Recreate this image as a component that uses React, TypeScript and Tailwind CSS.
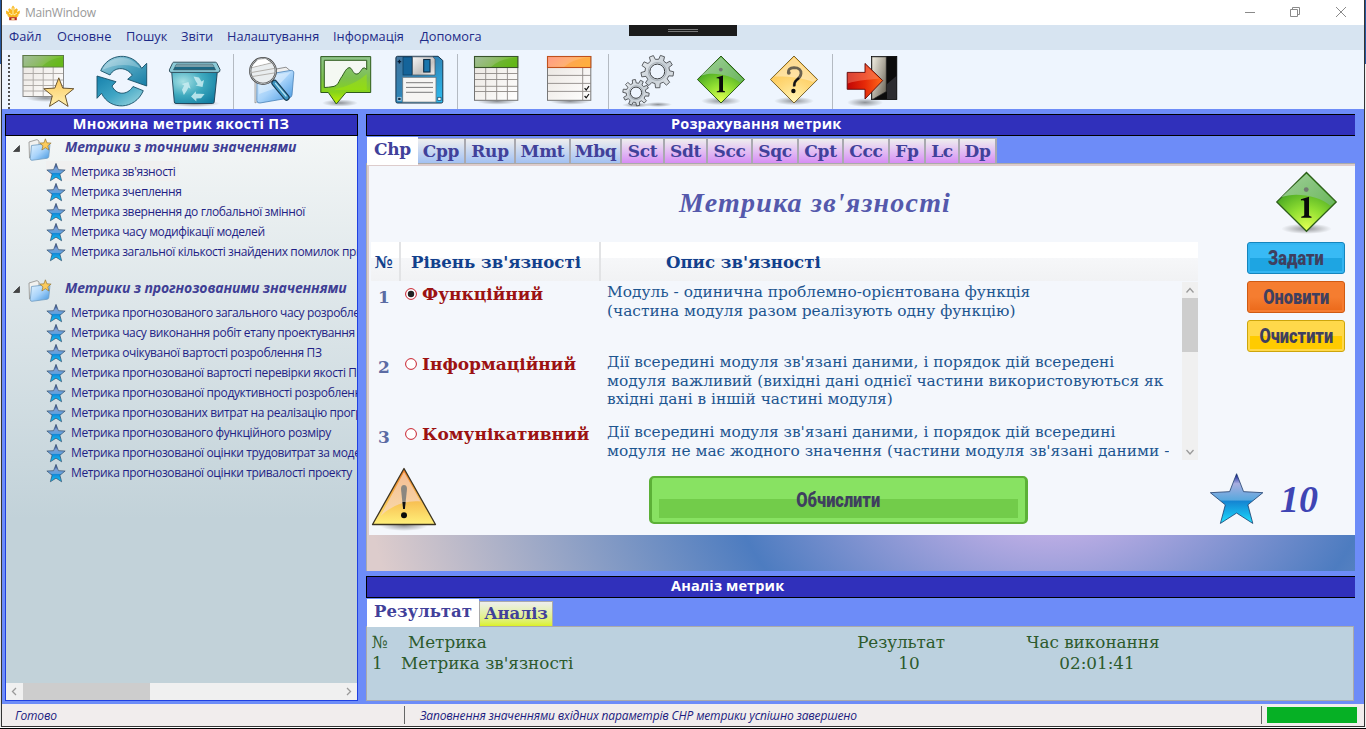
import React from "react";
import type { ReactNode } from "react";

const SANS = "font-['Open_Sans','Noto_Sans',sans-serif]";
const BOOK = "font-['DejaVu_Serif',serif]";

function starPoints(cx: number, cy: number, rx: number, ry: number, inner = 0.43) {
  const pts: string[] = [];
  for (let i = 0; i < 10; i++) {
    const k = i % 2 === 0 ? 1 : inner;
    const a = -Math.PI / 2 + (i * Math.PI) / 5;
    pts.push(`${(cx + Math.cos(a) * rx * k).toFixed(2)},${(cy + Math.sin(a) * ry * k).toFixed(2)}`);
  }
  return pts.join(" ");
}

function gearPath(cx: number, cy: number, outer: number, root: number, teeth: number) {
  const pts: string[] = [];
  const step = (Math.PI * 2) / teeth;
  for (let i = 0; i < teeth; i++) {
    const a = i * step + 0.15;
    const spec: [number, number][] = [
      [root, -0.3],
      [outer, -0.19],
      [outer, 0.19],
      [root, 0.3],
    ];
    spec.forEach(([r, o]) => {
      pts.push(`${(cx + Math.cos(a + o * step) * r).toFixed(2)} ${(cy + Math.sin(a + o * step) * r).toFixed(2)}`);
    });
  }
  return `M${pts.join(" L")} Z`;
}

function Defs() {
  return (
    <svg className="absolute h-0 w-0" aria-hidden="true">
      <defs>
        <linearGradient id="gGreenHead" x1="0" y1="0" x2="1" y2="0.3">
          <stop offset="0" stopColor="#a3bd9c" />
          <stop offset="0.5" stopColor="#8fbb6a" />
          <stop offset="1" stopColor="#6fc518" />
        </linearGradient>
        <linearGradient id="gOrangeHead" x1="0" y1="0" x2="1" y2="0.3">
          <stop offset="0" stopColor="#ff9a84" />
          <stop offset="0.5" stopColor="#ffae78" />
          <stop offset="1" stopColor="#ffbf4d" />
        </linearGradient>
        <linearGradient id="gPaper" x1="0" y1="0" x2="1" y2="1">
          <stop offset="0" stopColor="#e9e4df" />
          <stop offset="1" stopColor="#ffffff" />
        </linearGradient>
        <linearGradient id="gGold" x1="0" y1="0" x2="0" y2="1">
          <stop offset="0" stopColor="#fbc95e" />
          <stop offset="1" stopColor="#fff0b0" />
        </linearGradient>
        <linearGradient id="gTeal" x1="0" y1="0" x2="1" y2="1">
          <stop offset="0" stopColor="#a9d4e2" />
          <stop offset="0.5" stopColor="#4ea3bf" />
          <stop offset="1" stopColor="#157da6" />
        </linearGradient>
        <linearGradient id="gTeal2" x1="0" y1="0" x2="1" y2="1">
          <stop offset="0" stopColor="#1681ac" />
          <stop offset="0.5" stopColor="#3fa5c4" />
          <stop offset="1" stopColor="#a5dbe2" />
        </linearGradient>
        <radialGradient id="gBin" cx="0.25" cy="0.3" r="0.9">
          <stop offset="0" stopColor="#a6e0e4" />
          <stop offset="0.5" stopColor="#3ea9be" />
          <stop offset="1" stopColor="#0f7ba1" />
        </radialGradient>
        <linearGradient id="gFolder" x1="0" y1="0" x2="1" y2="1">
          <stop offset="0" stopColor="#e4f4ff" />
          <stop offset="0.5" stopColor="#a8d3fa" />
          <stop offset="1" stopColor="#3e93de" />
        </linearGradient>
        <linearGradient id="gChart" x1="0" y1="0" x2="0" y2="1">
          <stop offset="0" stopColor="#8fc48a" />
          <stop offset="0.45" stopColor="#7cc04f" />
          <stop offset="0.75" stopColor="#86d41a" />
          <stop offset="1" stopColor="#c2f000" />
        </linearGradient>
        <linearGradient id="gFloppy" x1="0" y1="0" x2="1" y2="1">
          <stop offset="0" stopColor="#44749c" />
          <stop offset="0.45" stopColor="#2f83b5" />
          <stop offset="1" stopColor="#2dc0f4" />
        </linearGradient>
        <linearGradient id="gMetal" x1="0" y1="0" x2="1" y2="1">
          <stop offset="0" stopColor="#f5f5f5" />
          <stop offset="0.6" stopColor="#c4c2c0" />
          <stop offset="1" stopColor="#f2f0ee" />
        </linearGradient>
        <linearGradient id="gGear" x1="0" y1="0" x2="1" y2="1">
          <stop offset="0" stopColor="#f2f5f8" />
          <stop offset="0.5" stopColor="#c5cdd4" />
          <stop offset="1" stopColor="#e4e8ec" />
        </linearGradient>
        <radialGradient id="gDiaGreen" cx="0.5" cy="0.95" r="0.75">
          <stop offset="0" stopColor="#e0ff52" />
          <stop offset="0.45" stopColor="#92e032" />
          <stop offset="1" stopColor="#3d9f20" />
        </radialGradient>
        <linearGradient id="gGlossGreen" x1="0" y1="0" x2="1" y2="1">
          <stop offset="0" stopColor="#b4dab0" />
          <stop offset="1" stopColor="#6cb566" />
        </linearGradient>
        <radialGradient id="gDiaGold" cx="0.5" cy="0.95" r="0.8">
          <stop offset="0" stopColor="#fff4b4" />
          <stop offset="0.5" stopColor="#ffd97a" />
          <stop offset="1" stopColor="#fcc44e" />
        </radialGradient>
        <linearGradient id="gRed" x1="0" y1="0" x2="1" y2="0">
          <stop offset="0" stopColor="#c00505" />
          <stop offset="0.5" stopColor="#e62a08" />
          <stop offset="1" stopColor="#ff6a1a" />
        </linearGradient>
        <linearGradient id="gDoor" x1="0" y1="0" x2="1" y2="0.8">
          <stop offset="0" stopColor="#f3f0e4" />
          <stop offset="0.6" stopColor="#aaa598" />
          <stop offset="1" stopColor="#6d685c" />
        </linearGradient>
        <radialGradient id="gShadow">
          <stop offset="0" stopColor="#000" stopOpacity="0.4" />
          <stop offset="1" stopColor="#000" stopOpacity="0" />
        </radialGradient>
        <linearGradient id="gStar" x1="0" y1="0" x2="0" y2="1">
          <stop offset="0" stopColor="#000078" />
          <stop offset="0.1" stopColor="#5560b8" />
          <stop offset="0.2" stopColor="#a8aee0" />
          <stop offset="0.53" stopColor="#58a8de" />
          <stop offset="0.55" stopColor="#1484d2" />
          <stop offset="0.8" stopColor="#18b4ea" />
          <stop offset="1" stopColor="#22e4ff" />
        </linearGradient>
        <linearGradient id="gStarSmall" x1="0" y1="0" x2="0" y2="1">
          <stop offset="0" stopColor="#10206a" />
          <stop offset="0.3" stopColor="#7b9fd6" />
          <stop offset="0.55" stopColor="#5a9fdc" />
          <stop offset="0.58" stopColor="#1489d8" />
          <stop offset="1" stopColor="#12c8f6" />
        </linearGradient>
        <linearGradient id="gWarn" x1="0" y1="0" x2="0" y2="1">
          <stop offset="0" stopColor="#f07a20" />
          <stop offset="0.5" stopColor="#f6b54a" />
          <stop offset="1" stopColor="#fff07a" />
        </linearGradient>
        <linearGradient id="gWarnGloss" x1="0" y1="0" x2="0" y2="1">
          <stop offset="0" stopColor="#f5c8a8" />
          <stop offset="1" stopColor="#f8d8b4" />
        </linearGradient>
      </defs>
    </svg>
  );
}

function ToolIcon({ children }: { children: ReactNode }) {
  return (
    <svg className="mt-1 block h-[54px] w-[54px] shrink-0" viewBox="0 0 54 54">
      {children}
    </svg>
  );
}

function TableStarIcon() {
  return (
    <ToolIcon>
      <ellipse cx="24" cy="44" rx="20" ry="4" fill="url(#gShadow)" />
      <rect x="1" y="1.5" width="40.5" height="41" fill="url(#gPaper)" stroke="#8a8a8a" />
      <path d="M11.2 13v29M21.2 13v29M31.2 13v29M1 19.5h40M1 26h40M1 31.5h40M1 37h40" stroke="#a9a5a2" strokeWidth="0.9" />
      <rect x="1" y="1.5" width="40.5" height="11.5" fill="url(#gGreenHead)" stroke="#5b7a45" strokeWidth="1" />
      <path d="M20 12.5C26 7 32 4 41 3v9.5z" fill="#5fae20" opacity="0.5" />
      <polygon points={starPoints(36.8, 39.6, 15.8, 15.8)} fill="url(#gGold)" stroke="#5b4520" strokeWidth="0.9" />
    </ToolIcon>
  );
}

function RefreshIcon() {
  return (
    <ToolIcon>
      <path d="M4.7 16.7C12-1 36-3 45.7 14.3L50.7 9.3V32L31.7 25.3 36.3 21.3C31 13 19 12 14 21z" fill="url(#gTeal)" stroke="#164f68" strokeWidth="0.9" />
      <path d="M1 22 20 27.7 16 32C20 41 31 42 37 32.5L47.3 36.7C39 56 14 57 5.5 39.3L1 44.3z" fill="url(#gTeal2)" stroke="#164f68" strokeWidth="0.9" />
      <path d="M6 16C14 2 34-1 44.5 14.5 34 9 18 10 6 16z" fill="#fff" opacity="0.25" />
    </ToolIcon>
  );
}

function BinIcon() {
  const arrow = "M25.5 22.5 31 23.5 33.5 27.5 36 26 34.5 33 27.5 31.5 29.7 30.2 27.5 26.8z";
  return (
    <ToolIcon>
      <ellipse cx="27" cy="49.5" rx="25" ry="3.5" fill="url(#gShadow)" />
      <path d="M3.7 18 6.3 48Q6.5 49.5 8 49.5H44.5Q46 49.5 46.2 48L49.3 18z" fill="url(#gBin)" stroke="#1d3d52" strokeWidth="0.9" />
      <path d="M5.6 8.2H47.4Q48.5 8.2 49 9.5L52 15.5Q52.3 18.2 50 18.4H3Q1 18.2 1.4 15.8L4.5 9.2Q5 8.2 5.6 8.2z" fill="#8ccbd8" stroke="#30505e" strokeWidth="1" />
      <path d="M8.5 10.2H44.5L47.5 15.8H5.5z" fill="#1c6884" stroke="#24404c" strokeWidth="0.6" />
      <path d="M8.5 10.2H44.5L46 13H7z" fill="#9ab0b4" opacity="0.75" />
      <g fill="#c9edf2" opacity="0.85">
        <path d={arrow} />
        <path d={arrow} transform="rotate(120 26 34.5)" />
        <path d={arrow} transform="rotate(240 26 34.5)" />
      </g>
    </ToolIcon>
  );
}

function SearchFolderIcon() {
  return (
    <ToolIcon>
      <path d="M9 24 12 22 14 46 9 49z" fill="#e6e6e6" stroke="#888" strokeWidth="0.7" />
      <path d="M25 16 40 13.2 44 16.5V24H25z" fill="#efefef" stroke="#777" strokeWidth="0.8" />
      <path d="M11 25Q12 22 15 21.5L44 16.5Q48 16 47.8 19L46 41Q45.6 43.5 43 44L14 49Q11 49.5 10.8 46.5z" fill="url(#gFolder)" stroke="#4a82b6" strokeWidth="0.8" />
      <path d="M14 24 45 18 30 34 13 40z" fill="#fff" opacity="0.35" />
      <path d="M28.5 29 40.5 43.5" stroke="#16394f" strokeWidth="6.4" strokeLinecap="round" />
      <path d="M28.5 29 40.5 43.5" stroke="#3d94c0" strokeWidth="4.2" strokeLinecap="round" />
      <path d="M29.5 29.3 40 42" stroke="#b4e2f2" strokeWidth="1.3" strokeLinecap="round" />
      <circle cx="17" cy="17" r="12.8" fill="#e9edef" stroke="#4a4a4a" strokeWidth="2.2" />
      <circle cx="17" cy="17" r="12.8" fill="none" stroke="#c7cbce" strokeWidth="0.8" />
      <path d="M6 13.5 25 9M5.5 18.5 28 14.5M6.5 22.5 28 19" stroke="#b3b0ac" strokeWidth="1" />
      <path d="M6 13 24 8.5 20 5 12 5.5z" fill="#fff" />
    </ToolIcon>
  );
}

function ChartIcon() {
  return (
    <ToolIcon>
      <ellipse cx="20" cy="49" rx="18" ry="3.6" fill="url(#gShadow)" />
      <path d="M0.8 2.6H50.7V38.5H26L16.3 50 8.3 38.5H0.8z" fill="url(#gChart)" stroke="#2d5a1c" strokeWidth="1" />
      <path d="M4.3 6.3H46.7V15.5Q44.5 13 42.7 14.3C40.5 17 39 20.5 36 20C32.5 19.5 32 13 29 13.7C25.5 14.5 24 20 20.7 24.3C18.5 28.5 17.5 31.5 14 32.4Q8 33.5 4.3 33.5z" fill="#f4f8f2" stroke="#2d5a1c" strokeWidth="1" />
      <path d="M15 35C26 33 38 28 46.7 20V36H15z" fill="#a4e800" opacity="0.45" />
    </ToolIcon>
  );
}

function FloppyIcon() {
  return (
    <ToolIcon>
      <path d="M3.5 2.3H44L48.8 6.5V47.5Q48.8 49 47.3 49H3.5Q1.9 49 1.9 47.5V4Q1.9 2.3 3.5 2.3z" fill="url(#gFloppy)" stroke="#16324a" strokeWidth="1" />
      <rect x="9" y="3" width="9" height="18" fill="#15649a" stroke="#103a5a" strokeWidth="0.7" />
      <path d="M18.5 2.8H38.5L41 5V21H18.5z" fill="url(#gMetal)" stroke="#4e5a64" strokeWidth="0.8" />
      <rect x="29.7" y="5.5" width="6.3" height="12.5" fill="#1a76ad" stroke="#0e2c44" strokeWidth="1.1" />
      <rect x="8.7" y="23.3" width="33.3" height="24.8" fill="#f6f5f3" stroke="#6b7780" strokeWidth="0.8" />
      <path d="M12 28.7h27M12 33.4h27M12 38.3h27" stroke="#7a7a7a" strokeWidth="1" />
      <path d="M3.6 7.6h3.6M5.4 5.8v3.6" stroke="#071c34" strokeWidth="1.4" />
      <rect x="3.8" y="43.3" width="3.2" height="3.2" fill="#0f2c46" stroke="#cfe6f4" strokeWidth="0.7" />
      <rect x="43.8" y="43.3" width="3.2" height="3.2" fill="#fff" stroke="#15415e" strokeWidth="0.7" />
    </ToolIcon>
  );
}

function TableIcon() {
  return (
    <ToolIcon>
      <ellipse cx="25" cy="47.5" rx="20" ry="3.2" fill="url(#gShadow)" />
      <rect x="2.5" y="2.5" width="43.3" height="43.8" fill="url(#gPaper)" stroke="#747474" />
      <path d="M13.7 14v32M24.7 14v32M35.4 14v32M3 19.5h43M3 25.5h43M3 32.3h43M3 37.5h43" stroke="#8e8a87" strokeWidth="0.9" />
      <rect x="2.5" y="2.5" width="43.3" height="11" fill="url(#gGreenHead)" stroke="#38542a" strokeWidth="1.1" />
      <path d="M19 13C26 7 34 4 45 3.5V13z" fill="#58aa18" opacity="0.5" />
    </ToolIcon>
  );
}

function ChecklistIcon() {
  return (
    <ToolIcon>
      <ellipse cx="24" cy="47.5" rx="20" ry="3.2" fill="url(#gShadow)" />
      <rect x="1.5" y="2.5" width="43.3" height="43.8" fill="url(#gPaper)" stroke="#777" />
      <path d="M36.7 14v32M2 21.4h43M2 29.4h43M2 37.4h43" stroke="#8e8a87" strokeWidth="0.9" />
      <rect x="1.5" y="2.5" width="43.3" height="11" fill="url(#gOrangeHead)" stroke="#c0501c" strokeWidth="1.1" />
      <path d="M18 13C25 7 33 4 44 3.5V13z" fill="#ff9a2c" opacity="0.45" />
      <path d="M38.6 34.2 40.2 36 43 32.2M38.6 42 40.2 43.8 43 40" fill="none" stroke="#111" strokeWidth="1.2" />
    </ToolIcon>
  );
}

function GearsIcon() {
  return (
    <ToolIcon>
      <ellipse cx="14" cy="51" rx="14" ry="2.5" fill="url(#gShadow)" />
      <ellipse cx="36" cy="50.5" rx="14" ry="2.5" fill="url(#gShadow)" />
      <path d={gearPath(35.3, 17.5, 16.4, 12.3, 9)} fill="url(#gGear)" stroke="#4c4f53" strokeWidth="0.9" />
      <circle cx="35.3" cy="17.5" r="7.4" fill="#eef5fe" stroke="#3c3f43" strokeWidth="1" />
      <circle cx="35.3" cy="17.5" r="9" fill="none" stroke="#98a0a8" strokeWidth="0.7" />
      <path d={gearPath(14, 38.7, 13.2, 9.8, 10)} fill="url(#gGear)" stroke="#4c4f53" strokeWidth="0.9" />
      <circle cx="14" cy="38.7" r="5.6" fill="#eef5fe" stroke="#3c3f43" strokeWidth="1" />
      <circle cx="14" cy="38.7" r="7" fill="none" stroke="#98a0a8" strokeWidth="0.7" />
    </ToolIcon>
  );
}

function InfoDiamond() {
  return (
    <>
      <ellipse cx="25" cy="47" rx="20" ry="4.2" fill="url(#gShadow)" />
      <path d="M25 2 48.6 25.5 25 49 1.4 25.5z" fill="url(#gDiaGreen)" stroke="#2c5c1a" strokeWidth="1" />
      <path d="M25 3 47.4 25.5 44 28.5C36 21 16 17 5 21.8z" fill="url(#gGlossGreen)" opacity="0.85" />
      <circle cx="24.8" cy="15.6" r="1.9" fill="#707a70" />
      <path d="M20.6 23.4 27 21.4V36.2Q27 37 29 37.3V38.2H20.8V37.3Q23.2 37 23.2 36.2V25Q23.2 24 20.6 24.3z" fill="#0a0a0a" />
    </>
  );
}

function InfoIcon() {
  return (
    <ToolIcon>
      <InfoDiamond />
    </ToolIcon>
  );
}

function QuestionIcon() {
  return (
    <ToolIcon>
      <ellipse cx="26" cy="47" rx="20" ry="4.2" fill="url(#gShadow)" />
      <path d="M26 2 49.6 25.5 26 49 2.4 25.5z" fill="url(#gDiaGold)" stroke="#7a6530" strokeWidth="1" />
      <path d="M26 3.2 48.4 25.5 45 28C37 24 18 22 6.5 22.5z" fill="#fff0cf" opacity="0.55" />
      <path d="M20.3 19Q19.5 14 26 13.6Q33.3 13.8 33 19.6Q32.6 23.4 28.6 26Q26 28 26.2 32.4" fill="none" stroke="#6b6250" strokeWidth="2.8" />
      <path d="M31 24Q30 25 28.6 26Q26 28 26.2 32.4" fill="none" stroke="#111" strokeWidth="2" />
      <circle cx="20.8" cy="18.8" r="1.9" fill="#6b6250" />
      <circle cx="25.4" cy="37" r="2.2" fill="#0a0a0a" />
    </ToolIcon>
  );
}

function ExitIcon() {
  return (
    <ToolIcon>
      <ellipse cx="19" cy="48.5" rx="18" ry="4.5" fill="url(#gShadow)" />
      <rect x="25.4" y="2.4" width="25.4" height="43" fill="#0c0c0c" stroke="#000" strokeWidth="0.8" />
      <path d="M41 30 50.4 22V45H41z" fill="#2c2c30" />
      <path d="M25.8 2.8H40.3V37.5L27 45.2H25.8z" fill="url(#gDoor)" stroke="#222" strokeWidth="0.7" />
      <path d="M1.2 18.4H19V9.4L36.7 26.6 19 45V35.3H1.2z" fill="url(#gRed)" stroke="#5c0808" strokeWidth="0.9" />
      <path d="M1.8 19H19.6V11L33 24.5C22 26 12 26 1.8 29.5z" fill="#ff9d80" opacity="0.4" />
    </ToolIcon>
  );
}

function Separator() {
  return <div className="mt-1 h-[55px] w-px shrink-0 bg-[#b4bac2]" />;
}

function FolderIcon() {
  return (
    <svg className="h-6 w-6 shrink-0" viewBox="0 0 24 24">
      <path d="M1 4 9 1.6 11 3V8L4 22 1.5 20z" fill="#f1f1ef" stroke="#8e8e8c" strokeWidth="0.8" />
      <path d="M3.5 7.5 20 5.5Q22 5.4 21.9 7L20.8 18.4Q20.6 20 19 20.3L4 22.3Q2.3 22.4 2.3 20.6z" fill="url(#gFolder)" stroke="#6f9cc2" strokeWidth="0.8" />
      <polygon points={starPoints(17.4, 7, 6, 6.2)} fill="#fbcb5c" stroke="#8a6a25" strokeWidth="0.6" />
    </svg>
  );
}

function SmallStar() {
  return (
    <svg className="h-[19px] w-5 shrink-0" viewBox="0 0 20 19">
      <polygon points={starPoints(10, 10, 9.6, 9.6)} fill="url(#gStarSmall)" stroke="#35506e" strokeWidth="0.7" />
    </svg>
  );
}

function GroupRow({ children }: { children: ReactNode }) {
  return (
    <div className="flex h-6 items-center pl-[7px]">
      <svg className="h-[7px] w-[7px]" viewBox="0 0 7 7">
        <path d="M6.5 0.5V6.5H0.5z" fill="#444" stroke="#222" strokeWidth="0.6" />
      </svg>
      <div className="pt-1 pl-2">
        <FolderIcon />
      </div>
      <span className="pb-[2px] pl-[13px] text-[14px] leading-5 font-bold tracking-[-0.13px] whitespace-nowrap text-[#3f3f95] italic">{children}</span>
    </div>
  );
}

function TreeItem({ text, selected }: { text: string; selected?: boolean }) {
  return (
    <div className="flex h-5 items-start pl-10">
      <div className={selected ? "flex h-5 items-center bg-[#f0f0f0] pr-1" : "flex h-5 items-center pr-1"}>
        <div className="pt-[2px]">
          <SmallStar />
        </div>
        <span className="pt-[2px] pl-[5px] text-[12px] leading-[18px] tracking-[-0.37px] whitespace-nowrap text-[#1f1f85]">{text}</span>
      </div>
    </div>
  );
}

const exactMetrics = [
  "Метрика зв'язності",
  "Метрика зчеплення",
  "Метрика звернення до глобальної змінної",
  "Метрика часу модифікації моделей",
  "Метрика загальної кількості знайдених помилок при",
];

const forecastMetrics = [
  "Метрика прогнозованого загального часу розроблення",
  "Метрика часу виконання робіт етапу проектування",
  "Метрика очікуваної вартості розроблення ПЗ",
  "Метрика прогнозованої вартості перевірки якості ПЗ",
  "Метрика прогнозованої продуктивності розроблення",
  "Метрика прогнозованих витрат на реалізацію програм",
  "Метрика прогнозованого функційного розміру",
  "Метрика прогнозованої оцінки трудовитрат за моделлю",
  "Метрика прогнозованої оцінки тривалості проекту",
];

function Sidebar() {
  return (
    <aside className="flex w-[353px] shrink-0 flex-col">
      <div className="flex h-[22px] items-center justify-center border border-black bg-[#3030bb] pr-[1px] pb-[1px] text-[14.5px] leading-none font-bold tracking-[0.3px] text-white">
        Множина метрик якості ПЗ
      </div>
      <div className="flex h-[565px] flex-col border-x border-b border-[#2040e0]">
        <div className="h-[547px] overflow-hidden bg-gradient-to-b from-[#f3f6f6] to-[#c2d2d9] to-70%">
          <GroupRow>Метрики з точними значеннями</GroupRow>
          <div className="pt-[1px]">
            {exactMetrics.map((m, i) => (
              <TreeItem key={m} text={m} selected={i === 0} />
            ))}
          </div>
          <div className="h-4" />
          <GroupRow>Метрики з прогнозованими значеннями</GroupRow>
          <div className="pt-[1px]">
            {forecastMetrics.map((m) => (
              <TreeItem key={m} text={m} />
            ))}
          </div>
        </div>
        <div className="flex h-[17px] items-center bg-[#f0f0f0]">
          <svg className="h-[17px] w-[17px]" viewBox="0 0 17 17">
            <path d="M10 5 6.5 8.5 10 12" fill="none" stroke="#9a9a9a" strokeWidth="1.3" />
          </svg>
          <div className="h-[17px] w-[127px] bg-[#cdcdcd]" />
          <div className="grow" />
          <svg className="h-[17px] w-[17px]" viewBox="0 0 17 17">
            <path d="M7 5 10.5 8.5 7 12" fill="none" stroke="#9a9a9a" strokeWidth="1.3" />
          </svg>
        </div>
      </div>
    </aside>
  );
}

const tabs = [
  { name: "Cpp", cls: "w-[48px] to-[#a3c1f2]" },
  { name: "Rup", cls: "w-[50px] to-[#a3c1f2]" },
  { name: "Mmt", cls: "w-[55px] to-[#a3c1f2]" },
  { name: "Mbq", cls: "w-[51px] to-[#a3c1f2]" },
  { name: "Sct", cls: "w-[43px] to-[#d68df4]" },
  { name: "Sdt", cls: "w-[43px] to-[#d68df4]" },
  { name: "Scc", cls: "w-[45px] to-[#d68df4]" },
  { name: "Sqc", cls: "w-[46px] to-[#d68df4]" },
  { name: "Cpt", cls: "w-[45px] to-[#d68df4]" },
  { name: "Ccc", cls: "w-[46px] to-[#d68df4]" },
  { name: "Fp", cls: "w-[36px] to-[#d68df4]" },
  { name: "Lc", cls: "w-[34px] to-[#d68df4]" },
  { name: "Dp", cls: "w-[37px] to-[#d68df4]" },
];

const levels = [
  {
    n: 1,
    name: "Функційний",
    checked: true,
    lines: ["Модуль - одинична проблемно-орієнтована функція", "(частина модуля разом реалізують одну функцію)"],
  },
  {
    n: 2,
    name: "Інформаційний",
    checked: false,
    lines: [
      "Дії всередині модуля зв'язані даними, і порядок дій всередені",
      "модуля важливий (вихідні дані однієї частини використовуються як",
      "вхідні дані в іншій частині модуля)",
    ],
  },
  {
    n: 3,
    name: "Комунікативний",
    checked: false,
    lines: [
      "Дії всередині модуля зв'язані даними, і порядок дій всередині",
      "модуля не має жодного значення (частини модуля зв'язані даними -",
    ],
  },
];

function PanelHeader({ children }: { children: ReactNode }) {
  return (
    <div className="flex h-[22px] shrink-0 items-center border-y border-l border-black bg-[#3030bb] pb-[1px] pl-[304px] text-[14.5px] leading-none font-bold tracking-[0.15px] text-white">
      {children}
    </div>
  );
}

function LevelTable() {
  return (
    <div className="ml-[2px] w-[827px]">
      <div className={`flex h-[39px] bg-[linear-gradient(#fff_41%,#f6f7f9_41%,#f1f2f4)] text-[16.6px] leading-none font-bold text-[#12408c] ${BOOK}`}>
        <div className="flex w-[30px] items-center border-r-2 border-[#e2e3e5] pt-[2px] pl-1 tracking-[-1px]">№</div>
        <div className="flex w-[200px] items-center border-r-2 border-[#e2e3e5] pt-[2px] pl-[10px] whitespace-nowrap">Рівень зв'язності</div>
        <div className="flex items-center pt-[2px] pl-[65px] whitespace-nowrap">Опис зв'язності</div>
      </div>
      <div className="flex h-[179px] justify-between">
        <div className="h-[179px] overflow-hidden">
          {levels.map((l) => (
            <div key={l.n} className={`flex h-[70px] ${BOOK}`}>
              <div className="w-[34px] pt-[6px] pl-[7px] text-[17px] leading-5 font-bold text-[#5b6ba3]">{l.n}</div>
              <svg className="mt-[7px] h-3 w-3" viewBox="0 0 12 12">
                <circle cx="6" cy="6" r="5.4" fill="#fff" stroke="#c8202c" strokeWidth="1" />
                {l.checked && <circle cx="6" cy="6" r="3.2" fill="#222" />}
              </svg>
              <div className="w-[190px] pt-[3px] pl-[5px] text-[17px] leading-5 font-bold whitespace-nowrap text-[#9c1212]">{l.name}</div>
              <div className="pt-[2px] text-[15.4px] leading-[18.7px] whitespace-nowrap text-[#1d5590]">
                {l.lines.map((t) => (
                  <div key={t}>{t}</div>
                ))}
              </div>
            </div>
          ))}
        </div>
        <div className="mt-[1px] flex h-[178px] w-4 flex-col bg-[#f0f0f0]">
          <svg className="h-4 w-4" viewBox="0 0 16 16">
            <path d="M4.5 10.5 8 6.5 11.5 10.5" fill="none" stroke="#9a9a9a" strokeWidth="1.3" />
          </svg>
          <div className="h-[54px] bg-[#cdcdcd]" />
          <div className="grow" />
          <svg className="h-4 w-4" viewBox="0 0 16 16">
            <path d="M4.5 6 8 10 11.5 6" fill="none" stroke="#9a9a9a" strokeWidth="1.3" />
          </svg>
        </div>
      </div>
    </div>
  );
}

function GlossButton({ label, frame, lower }: { label: string; frame: string; lower: string }) {
  return (
    <button className={`flex h-8 w-[98px] rounded-[3px] border p-[2px] ${frame}`}>
      <span className={`flex h-full w-full items-center justify-center ${lower}`}>
        <span className="scale-x-[0.78] font-['Roboto',sans-serif] text-[21px] leading-none font-black text-[#3f3f5f]">{label}</span>
      </span>
    </button>
  );
}

function MetricPane() {
  return (
    <div className="h-[408px] shrink-0 border-t border-l border-[#aaaaaa] bg-[#ddcccc]">
      <div className="pt-[2px] pl-[2px]">
        <div className="flex h-[369px] flex-col bg-[#f4f7fc]">
          <div className="flex h-[295px]">
            <div className="w-[829px]">
              <div className="h-[76px] pt-[19px] pl-[310px] font-['Liberation_Serif',serif] text-[28px] leading-9 font-bold tracking-[1.2px] whitespace-nowrap text-[#5559ac] italic">
                Метрика зв'язності
              </div>
              <LevelTable />
            </div>
            <div className="ml-[49px] w-[98px]">
              <div className="h-[76px] pt-1 pl-7">
                <svg className="h-[65px] w-[63px]" viewBox="0 0 50 52" preserveAspectRatio="none">
                  <InfoDiamond />
                </svg>
              </div>
              <div className="flex flex-col gap-[7px]">
                <GlossButton label="Задати" frame="border-[#1585bd] bg-[#33b5f2]" lower="bg-[linear-gradient(#38baf5_50%,#1ea5e2_50%)]" />
                <GlossButton label="Оновити" frame="border-[#cf5a12] bg-[#f67c30]" lower="bg-[linear-gradient(#f57d30_50%,#ec6b1c)]" />
                <GlossButton label="Очистити" frame="border-[#cda50c] bg-[#ffd84a]" lower="bg-[linear-gradient(#ffd84a_50%,#ffcb00_50%)]" />
              </div>
            </div>
          </div>
          <div className="flex h-[74px]">
            <svg className="mt-[5px] ml-[2px] h-[66px] w-[66px]" viewBox="0 0 66 66">
              <ellipse cx="33" cy="59.5" rx="24" ry="5.5" fill="url(#gShadow)" />
              <path d="M33 2.5 64.5 58.5H1.5z" fill="url(#gWarn)" stroke="#3c3422" strokeWidth="1.3" strokeLinejoin="round" />
              <path d="M33 6 49.5 35.5C38 34 22 38 9.5 50z" fill="url(#gWarnGloss)" opacity="0.85" />
              <path d="M33 19Q36 19 36 23L33.9 43H32.1L30 23Q30 19 33 19z" fill="#8b8780" />
              <path d="M31.5 36H34.5L33.9 43H32.1z" fill="#111" />
              <circle cx="33" cy="49.3" r="3" fill="#0a0a0a" />
            </svg>
            <button className="mt-[15px] ml-[212px] flex h-12 w-[379px] rounded-[5px] border-x-[3px] border-y-2 border-[#5cb037] bg-[#88e262] px-[7px] pt-[3px] pb-1">
              <span className="flex h-full w-full items-center justify-center bg-[linear-gradient(#88e262_50%,#72cc4a_50%)]">
                <span className="scale-x-[0.82] font-['Roboto',sans-serif] text-[20px] leading-none font-black text-[#3f3f5f]">Обчислити</span>
              </span>
            </button>
            <svg className="mt-[11px] ml-[181px] h-[54px] w-[56px]" viewBox="0 0 56 54">
              <polygon points={starPoints(27.6, 29.2, 27.6, 27.5)} fill="url(#gStar)" stroke="#1c3c6c" strokeWidth="0.8" />
            </svg>
            <div className="pt-[18px] pl-[15px] font-['Liberation_Serif',serif] text-[38px] leading-10 font-bold text-[#3f45b4] italic">10</div>
          </div>
        </div>
      </div>
      <div className="h-9 bg-[radial-gradient(ellipse_682px_434px_at_683px_-55px,#e2bef1_0%,#4d7cc0_46.5%,#ddcccc_100%)]" />
    </div>
  );
}

function Workspace() {
  return (
    <section className="flex w-[989px] shrink-0 flex-col">
      <PanelHeader>Розрахування метрик</PanelHeader>
      <div className={`flex h-[27px] items-end text-[17px] leading-none font-bold text-[#41419a] ${BOOK}`}>
        <div className="relative -mb-[2px] ml-[1px] flex h-7 w-[51px] items-center justify-center bg-white pb-[3px] tracking-[-0.3px]">Chp</div>
        {tabs.map((t) => (
          <div
            key={t.name}
            className={`flex h-[25px] items-center justify-center border-t border-r-2 border-[#a9a9b0] bg-gradient-to-b from-[#eeeeee] tracking-[-0.3px] ${t.cls}`}
          >
            {t.name}
          </div>
        ))}
      </div>
      <MetricPane />
      <div className="h-[5px] shrink-0" />
      <PanelHeader>Аналіз метрик</PanelHeader>
      <div className={`flex h-7 items-end text-[16.5px] leading-none font-bold text-[#41419a] ${BOOK}`}>
        <div className="relative -mb-[1px] ml-[1px] flex h-7 w-[112px] items-center justify-center bg-white pb-[2px]">Результат</div>
        <div className="flex h-[25px] w-[74px] items-center justify-center border-x border-t border-[#aaa] bg-gradient-to-b from-[#eeeeee] to-[#dcf01c] tracking-[-0.2px]">Аналіз</div>
      </div>
      <div className={`grid h-[75px] w-[988px] grid-cols-[29px_410px_180px_204px] content-start border border-[#aaaaaa] bg-[#bcd1df] pt-[5px] pl-[5px] text-[16.8px] leading-[21px] text-[#2c5a2c] ${BOOK}`}>
        <div className="tracking-[-1px]">№</div>
        <div className="pl-[7px]">Метрика</div>
        <div className="text-center tracking-[-0.1px]">Результат</div>
        <div className="text-center">Час виконання</div>
        <div>1</div>
        <div>Метрика зв'язності</div>
        <div className="pl-4 text-center">10</div>
        <div className="pl-2 text-center">02:01:41</div>
      </div>
    </section>
  );
}

const menu = [
  { name: "Файл", w: "w-[48px]" },
  { name: "Основне", w: "w-[69px]" },
  { name: "Пошук", w: "w-[55px]" },
  { name: "Звіти", w: "w-[46px]" },
  { name: "Налаштування", w: "w-[106px]" },
  { name: "Інформація", w: "w-[87px]" },
  { name: "Допомога", w: "w-[80px]" },
];

export default function App() {
  return (
    <div className={`flex h-[729px] w-[1366px] flex-col overflow-hidden bg-white ${SANS}`}>
      <Defs />
      <div className="flex h-[727px]">
        <div className="flex w-px flex-col">
          <div className="h-16 bg-[#2558a0]" />
          <div className="grow bg-[#e6e6e6]" />
        </div>
        <div className="flex w-[1364px] flex-col border-x border-b border-[#333333]">
          <div className="flex h-[25px] shrink-0 items-center bg-white pl-[3px]">
            <svg className="h-4 w-4" viewBox="0 0 16 16">
              <path d="M8 0.5 9.6 2.6 9.4 5 11.5 3.2 12.8 4.4 12 7 15 5.6 14.6 8.6 12.4 10.4H14L11.6 12.4H4.4L2 10.4H3.6L1.2 8.8 1 5.6 4 7 3.2 4.2 4.6 3.2 6.6 5V2.4z" fill="#f9b61e" />
              <path d="M8 2.5V10M4 8 7 10M12 8 9 10" stroke="#fff3b0" strokeWidth="1" />
              <path d="M4.2 12.2H11.8V15.2H4.2z" fill="#b7271c" />
              <path d="M6.4 13H9.6V15.2H6.4z" fill="#f3cf86" />
            </svg>
            <span className="pt-[1px] pl-1 text-[12px] leading-none tracking-[-0.25px] text-[#999999]">MainWindow</span>
            <div className="grow" />
            <svg className="h-4 w-[110px]" viewBox="0 0 110 16">
              <g fill="none" stroke="#8a8a8a" strokeWidth="1">
                <path d="M3 7.5H13" />
                <path d="M48.5 4.5H55.5V11.5H48.5zM50.5 4.5V2.5H57.5V9.5H55.5" />
                <path d="M94 2 104 12M104 2 94 12" />
              </g>
            </svg>
            <div className="w-[12px]" />
          </div>
          <div className="relative flex h-[25px] shrink-0 items-center bg-[#d7e4f1] pb-[3px] pl-[7px] text-[12.75px] leading-none text-[#1e2b88]">
            {menu.map((m) => (
              <div key={m.name} className={m.w}>
                {m.name}
              </div>
            ))}
            <div className="absolute top-0 left-[627px] flex h-[11px] w-[108px] flex-col items-center gap-px bg-[#1b1b1b] pt-1">
              <div className="h-px w-[30px] bg-[#777]" />
              <div className="h-px w-[30px] bg-[#777]" />
            </div>
          </div>
          <div className="flex h-[59px] shrink-0 bg-[#eef5fe]">
            <div className="mt-[5px] ml-[6px] h-[54px] w-[2px] bg-[repeating-linear-gradient(#555_0_2px,transparent_2px_4px)]" />
            <div className="ml-3 flex gap-5">
              <TableStarIcon />
              <RefreshIcon />
              <div className="-ml-[2px]">
                <BinIcon />
              </div>
            </div>
            <div className="ml-[11px]">
              <Separator />
            </div>
            <div className="ml-3 flex gap-5">
              <SearchFolderIcon />
              <ChartIcon />
              <FloppyIcon />
            </div>
            <div className="ml-[9px]">
              <Separator />
            </div>
            <div className="ml-[14px] flex gap-5">
              <TableIcon />
              <ChecklistIcon />
            </div>
            <div className="ml-2">
              <Separator />
            </div>
            <div className="ml-[13px] flex gap-5">
              <GearsIcon />
              <InfoIcon />
              <div className="-ml-[2px]">
                <QuestionIcon />
              </div>
            </div>
            <div className="ml-[10px]">
              <Separator />
            </div>
            <div className="ml-[13px]">
              <ExitIcon />
            </div>
          </div>
          <div className="flex h-[595px] shrink-0 gap-2 bg-[#6d8cf8] pt-[5px] pl-[3px]">
            <Sidebar />
            <Workspace />
          </div>
          <div className="flex h-[22px] shrink-0 items-center bg-[#f1eded] text-[12px] leading-none text-[#1c1c80] italic">
            <div className="w-[402px] pt-[2px] pl-[13px] tracking-[-0.2px]">Готово</div>
            <div className="h-[18px] w-px bg-[#666]" />
            <div className="w-[856px] pt-[2px] pl-[15px] tracking-[-0.15px] whitespace-nowrap">Заповнення значеннями вхідних параметрів CHP метрики успішно завершено</div>
            <div className="h-[18px] w-px bg-[#666]" />
            <div className="ml-[5px] h-4 w-[90px] bg-[#06b025]" />
          </div>
        </div>
        <div className="flex w-px flex-col">
          <div className="h-16 bg-[#2558a0]" />
          <div className="grow bg-[#f0f0f0]" />
        </div>
      </div>
      <div className="h-px" />
      <div className="h-px bg-black" />
    </div>
  );
}
